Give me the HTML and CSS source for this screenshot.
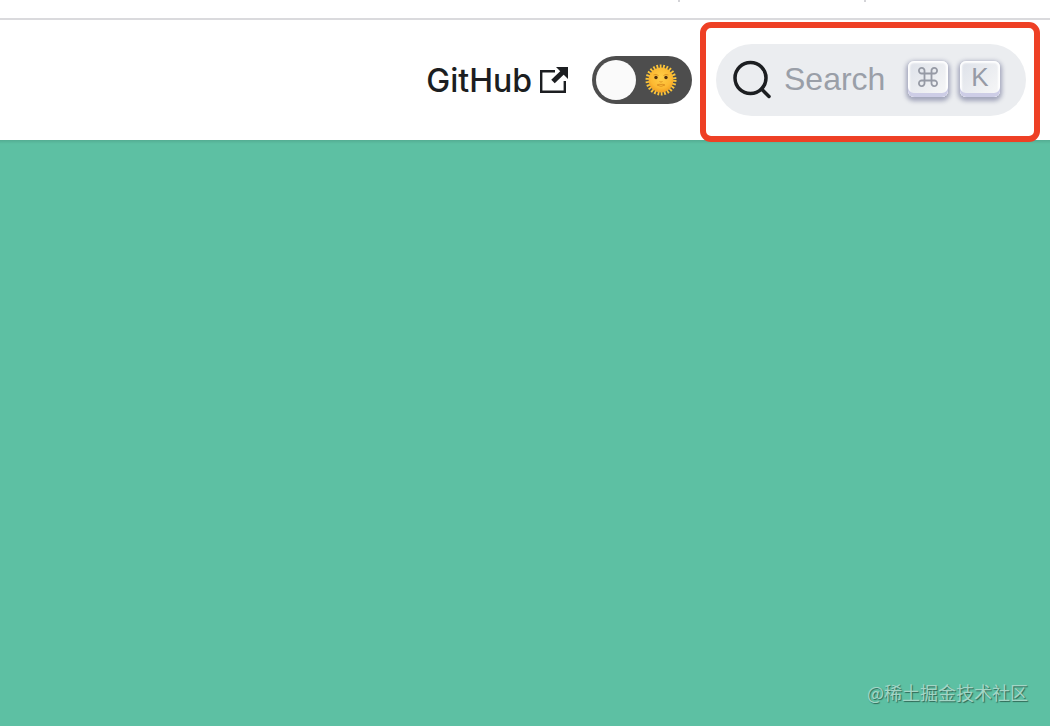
FILE: index.html
```html
<!DOCTYPE html>
<html lang="en">
<head>
  <meta charset="UTF-8" />
  <meta name="viewport" content="width=device-width, initial-scale=1.0" />
  <title>Home</title>
  <link rel="stylesheet" href="styles.css">
</head>
<body>
  <div class="tabstrip">
    <span class="tab"></span>
    <span class="tab"></span>
  </div>

  <nav class="navbar">
    <a href="#" class="nav-link">
      GitHub
      <svg class="icon-external" viewBox="0 0 28 26" aria-hidden="true">
        <path d="M15 4.200H1.200V24.800H24.800V14" fill="none" stroke="#1c1e21" stroke-width="2.400" />
        <path d="M13 14.500L24 4" stroke="#1c1e21" stroke-width="5" />
        <path d="M16 0H28V12Z" fill="#1c1e21" />
      </svg>
    </a>

    <label class="toggle">
      <input type="checkbox" class="toggle-input" aria-label="Dark mode">
      <span class="toggle-thumb"></span>
      <svg class="icon-sun" viewBox="0 0 32 32" aria-hidden="true">
        <defs>
          <radialGradient id="face" cx="0.5" cy="0.4" r="0.6">
            <stop offset="0" stop-color="#ffcf48" />
            <stop offset="0.7" stop-color="#fcb932" />
            <stop offset="1" stop-color="#f2a022" />
          </radialGradient>
        </defs>
        <circle cx="16" cy="16" r="13.5" fill="none" stroke="#fcc63a" stroke-width="4" stroke-dasharray="1.7 1.563" />
        <circle cx="16" cy="16" r="12.4" fill="url(#face)" />
        <ellipse cx="11" cy="13.5" rx="1.7" ry="1.8" fill="#51300f" />
        <ellipse cx="21" cy="13.5" rx="1.7" ry="1.8" fill="#51300f" />
        <path d="M8.500 11Q11 9.500 13.500 11.500M18.500 11.500Q21 9.500 23.500 11M14.500 17.500Q16 18.800 17.500 17.500M12 21Q14 19.800 16 20.500Q18 19.800 20 21Q16 23.800 12 21" fill="none" stroke="#dc901f" stroke-width="0.9" />
      </svg>
    </label>

    <div class="search-box">
      <button type="button" class="search">
        <svg class="icon-search" viewBox="0 0 40 40" aria-hidden="true">
          <circle cx="18.5" cy="19" r="15.5" />
          <path d="M29.500 30L37 37.500" />
        </svg>
        <span class="search-text">Search</span>
        <span class="key">
          <svg class="icon-command" viewBox="0 0 20 20" aria-hidden="true">
            <path d="M6.500 6.500H13.500V13.500H6.500ZM6.500 6.500H4A2.800 2.800 0 1 1 6.500 4ZM13.500 6.500V4A2.800 2.800 0 1 1 16 6.500ZM13.500 13.500H16A2.800 2.800 0 1 1 13.500 16ZM6.500 13.500V16A2.800 2.800 0 1 1 4 13.500Z" />
          </svg>
        </span>
        <span class="key">K</span>
      </button>
    </div>
  </nav>

  <main class="hero">
    <span class="credit">@稀土掘金技术社区</span>
  </main>
</body>
</html>
```
FILE: styles.css
```css
* {
  box-sizing: border-box;
}
body {
  margin: 0;
  min-height: 100vh;
  display: flex;
  flex-direction: column;
  font-family: Inter, "Liberation Sans", sans-serif;
  background-color: #fff;
  color: #1c1e21;
}
.tabstrip {
  display: flex;
  justify-content: flex-end;
  height: 20px;
  padding-right: 184px;
  border-bottom: 2px solid #dadadd;
}
.tab {
  width: 186px;
  height: 2px;
  border-right: 2px solid #d4d4d8;
}
.navbar {
  display: flex;
  align-items: center;
  justify-content: flex-end;
  gap: 24px;
  height: 120px;
  padding-right: 24px;
}
.nav-link {
  display: flex;
  align-items: center;
  gap: 8px;
  color: #1c1e21;
  font-size: 32px;
  font-weight: 500;
  text-decoration: none;
}
.icon-external {
  width: 28px;
  height: 26px;
}
.toggle {
  display: flex;
  align-items: center;
  justify-content: space-between;
  position: relative;
  width: 100px;
  height: 48px;
  padding: 0 15px 0 4px;
  border-radius: 24px;
  background-color: #4d4d4d;
  cursor: pointer;
}
.toggle-input {
  position: absolute;
  inset: 0;
  margin: 0;
  opacity: 0;
  cursor: pointer;
}
.toggle-thumb {
  width: 40px;
  height: 40px;
  border-radius: 50%;
  background-color: #fafafa;
}
.icon-sun {
  width: 32px;
  height: 32px;
}
.search-box {
  position: relative;
}
/* highlight frame around the search button */
.search-box::after {
  content: "";
  position: absolute;
  inset: -22px -14px -26px -16px;
  border: 6px solid #ee4025;
  border-radius: 11px;
  pointer-events: none;
}
.search {
  display: flex;
  align-items: center;
  width: 310px;
  height: 72px;
  padding: 0 26px 2px 16px;
  border: 0;
  border-radius: 36px;
  background-color: #ebedf0;
  color: #969faf;
  font-family: "Liberation Sans", Arial, sans-serif;
  font-size: 32px;
  cursor: pointer;
}
.icon-search {
  width: 40px;
  height: 40px;
  fill: none;
  stroke: #1c1e21;
  stroke-width: 3.5;
  stroke-linecap: round;
}
.search-text {
  margin: 0 auto 0 12px;
  color: #9a9fa8;
}
.key {
  display: flex;
  align-items: center;
  justify-content: center;
  width: 40px;
  height: 36px;
  margin-left: 12px;
  padding-bottom: 4px;
  border-radius: 6px;
  background: linear-gradient(-225deg, #dde1e9, #f8f8f8);
  box-shadow: inset 0 -4px 0 0 #cdcde6, inset 0 0 2px 2px #fff, 0 2px 4px 2px rgba(30, 35, 90, 0.35);
  color: #969aa5;
  font-size: 26px;
}
.icon-command {
  width: 20px;
  height: 20px;
  fill: none;
  stroke: #969aa5;
  stroke-width: 1.8;
}
.hero {
  flex: 1;
  display: flex;
  align-items: flex-end;
  justify-content: flex-end;
  padding: 22px;
  background-color: #5dc0a3;
  background-image: linear-gradient(rgba(0, 0, 0, 0.1), transparent 4px);
}
.credit {
  color: #a3d6c6;
  font-family: "Noto Sans CJK SC", sans-serif;
  font-size: 18px;
  line-height: 24px;
  text-shadow: 1px 1px 1px #2f6654;
}
```
